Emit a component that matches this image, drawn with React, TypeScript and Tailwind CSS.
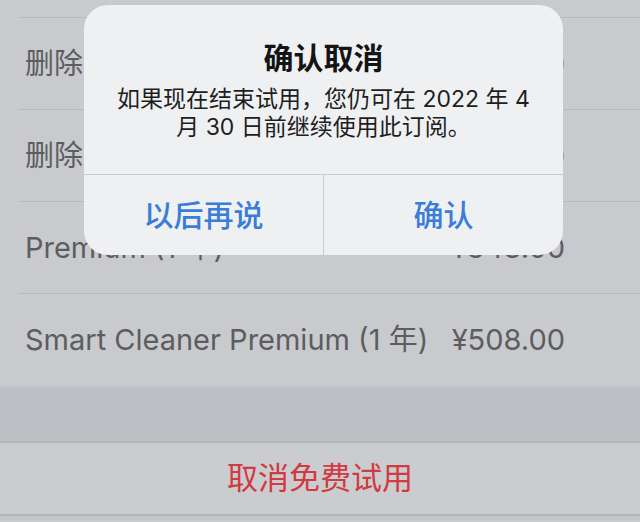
import React from "react";

const font = {
  fontFamily: '"Inter", "Noto Sans CJK SC", sans-serif',
};

function Row({ label, value }: { label: string; value: string }) {
  return (
    <div className="ml-[18px] flex h-[92px] items-center justify-between border-b border-[#b9babe] pl-[7px] pr-[75px]">
      <span className="text-[29px] text-[#5c5d61]">{label}</span>
      <span className="text-[29px] text-[#5c5d61]">{value}</span>
    </div>
  );
}

export default function App() {
  return (
    <div className="relative h-[522px] w-[640px] overflow-hidden bg-[#c9cacd]" style={font}>
      <div className="ml-[18px] h-[18px] border-b border-[#b9babe]" />
      <Row label="删除广告 (1 个月)" value="¥18.00" />
      <Row label="删除广告 (1 年)" value="¥98.00" />
      <Row label="Premium (1 年)" value="¥348.00" />
      <div className="flex h-[92px] items-center justify-between pl-[25px] pr-[75px]">
        <span className="text-[29px] text-[#5c5d61]">Smart Cleaner Premium (1 年)</span>
        <span className="text-[29px] text-[#5c5d61]">¥508.00</span>
      </div>
      <div className="h-[57px] border-t border-b-2 border-t-[#c3c4c8] border-b-[#b3b4b8] bg-[#bfc0c5]" />
      <div className="flex h-[73px] items-center justify-center border-b-2 border-[#b3b4b8] bg-[#cbccd0]">
        <span className="text-[31px] text-[#d03a40]">取消免费试用</span>
      </div>
      <div className="h-[4px] bg-[#c4c5c9]" />

      <div className="absolute left-[84px] top-[5px] flex h-[250px] w-[479px] flex-col overflow-hidden rounded-[24px] bg-[#eff0f2]">
        <div className="flex h-[170px] flex-col items-center border-b border-[#c9cacd] pt-[34px]">
          <div className="text-[30px] font-bold leading-[38px] text-[#141414]">确认取消</div>
          <div className="mt-[8px] text-center text-[23px] leading-[28px] text-[#1e1e1e]">
            <div>如果现在结束试用，您仍可在 2022 年 4</div>
            <div>月 30 日前继续使用此订阅。</div>
          </div>
        </div>
        <div className="flex flex-1">
          <div className="flex flex-1 items-center justify-center border-r border-[#c9cacd] text-[30px] font-medium text-[#3a7dd6]">
            以后再说
          </div>
          <div className="flex flex-1 items-center justify-center text-[30px] font-medium text-[#3a7dd6]">
            确认
          </div>
        </div>
      </div>
    </div>
  );
}
